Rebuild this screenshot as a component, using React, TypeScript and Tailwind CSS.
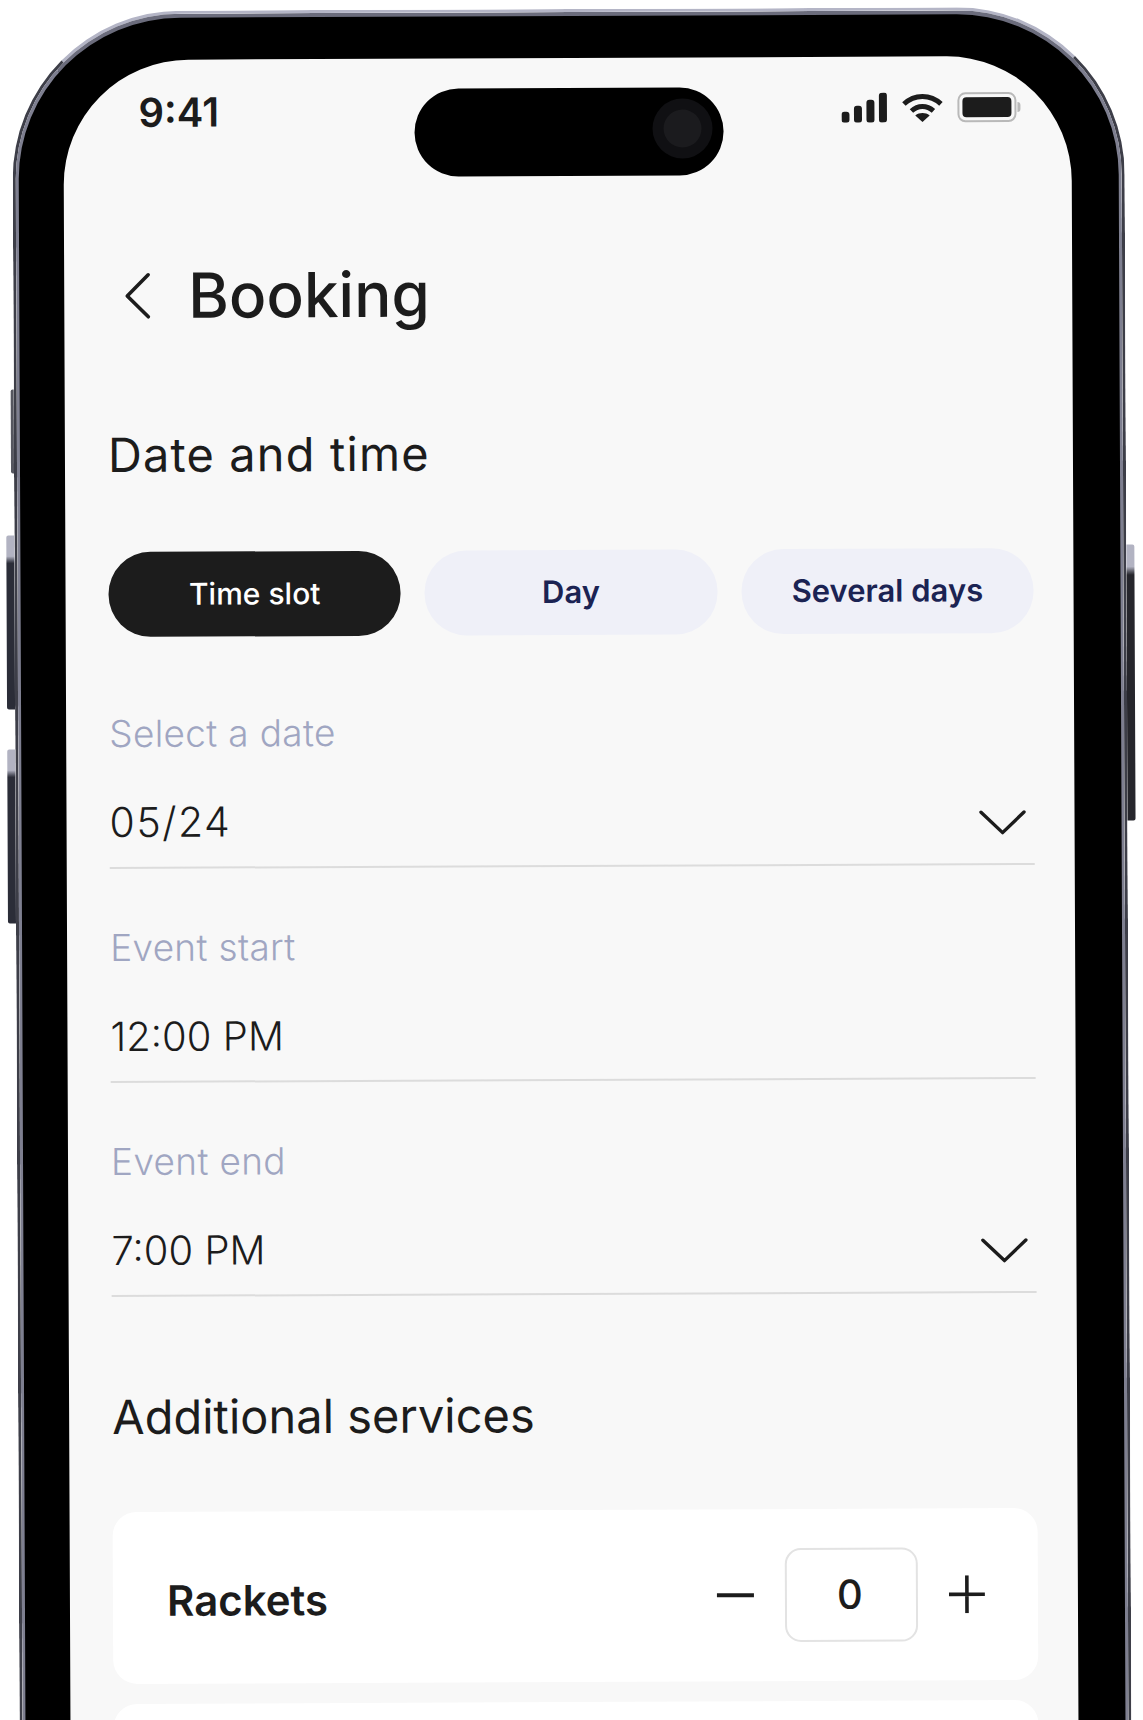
import React from 'react';

const inter = "font-['Inter','Noto_Sans',sans-serif]";

const Chevron = () => (
    <svg width="48" height="26" viewBox="0 0 48 26" fill="none" stroke="#1c1c1c" strokeWidth="3.4" strokeLinecap="round" strokeLinejoin="round">
        <path d="M2.5 3L24 23.5L45.5 3" />
    </svg>
);

const Field = ({ label, value, chevron, valueClass = 'text-[40px]' }: { label: string; value: string; chevron?: boolean; valueClass?: string }) => (
    <div className="flex flex-col">
        <div className={`h-10 flex items-center text-[37px] tracking-[0.3px] font-light text-[#a0a6c2] ${inter}`}>{label}</div>
        <div className={`mt-11 h-[50px] flex items-center justify-between font-light text-[#1c1c1c] ${valueClass} ${inter}`}>
            <span>{value}</span>
            {chevron && <span className="mr-2 mt-[6px] flex"><Chevron /></span>}
        </div>
        <div className="mt-[19px] h-[2px] bg-[#dcdcdc]" />
    </div>
);

const Pill = ({ label, active }: { label: string; active?: boolean }) => (
    <button className={`flex-1 h-[85px] rounded-[42px] flex items-center justify-center ${inter} ${active ? 'bg-[#1c1c1c] text-white text-[30px] font-medium' : 'bg-[#eff0f8] text-[#1b2353] text-[31px] font-semibold'}`}>
        {label}
    </button>
);

const StatusIcons = () => (
    <div className="flex items-center gap-[14px] mr-[11px] -mt-[4px]">
        <svg width="46" height="30" viewBox="0 0 46 30" fill="#1c1c1c">
            <rect x="0" y="19" width="8" height="11" rx="3" />
            <rect x="12.5" y="13" width="8" height="17" rx="3" />
            <rect x="25" y="7" width="8" height="23" rx="3" />
            <rect x="37.5" y="0" width="8" height="30" rx="3" />
        </svg>
        <svg width="42" height="30" viewBox="0 0 42 30" fill="none">
            <path d="M2.5 11.5C13 1.5 29 1.5 39.5 11.5" stroke="#1c1c1c" strokeWidth="5" />
            <path d="M10 18.5C16.5 12.5 25.5 12.5 32 18.5" stroke="#1c1c1c" strokeWidth="5" />
            <path d="M21 29.5L13.8 23C18 19.8 24 19.8 28.2 23Z" fill="#1c1c1c" />
        </svg>
        <div className="flex items-center gap-[1px]">
            <div className="w-[59px] h-[30px] rounded-[8px] border-[2px] border-[#b9b9b9] p-[3px] flex">
                <div className="flex-1 rounded-[4px] bg-[#1c1c1c]" />
            </div>
            <div className="w-[3px] h-[10px] rounded-r-full bg-[#b9b9b9]" />
        </div>
    </div>
);

const App: React.FC = () => {
    return (
        <div className="w-[1143px] h-[1720px] overflow-hidden bg-white">
            <div className="relative ml-[12px] mt-[9px] w-[1112px] h-[1800px] origin-top rotate-[-0.25deg]">
                {/* side buttons */}
                <div className="absolute -left-[3px] top-[378px] w-[3px] h-[84px] rounded-l-[2px] bg-[#55565f]" />
                <div className="absolute -left-[8px] top-[524px] w-[8px] h-[174px] rounded-l-[2px] bg-linear-to-b from-[#b2b3c2] from-[12%] to-[#2b2d38] to-[16%]" />
                <div className="absolute -left-[8px] top-[738px] w-[8px] h-[174px] rounded-l-[2px] bg-linear-to-b from-[#b2b3c2] from-[12%] to-[#2b2d38] to-[16%]" />
                <div className="absolute -right-[8px] top-[538px] w-[8px] h-[276px] rounded-r-[2px] bg-linear-to-b from-[#b2b3c2] from-[8%] to-[#26262c] to-[11%]" />

                <div className="h-full rounded-t-[168px] border-t-[3px] border-x-[3px] border-t-[#b4b5c6] border-x-[#3d3e48]">
                    <div className="h-full rounded-t-[165px] border-t-[4px] border-x-[3px] border-t-[#6b6c7c] border-x-[#7e7f90] bg-black pt-[42px] pl-[45px] pr-[47px]">
                        <div className="relative h-full rounded-t-[125px] bg-[#f8f8f8] pl-[43px] pr-[40px]">
                            {/* dynamic island */}
                            <div className="absolute left-[351px] top-[30px] w-[309px] h-[88px] rounded-full bg-black">
                                <div className="absolute right-[11px] top-[11px] w-[60px] h-[60px] rounded-full bg-[#101013] flex items-center justify-center">
                                    <div className="w-[38px] h-[38px] rounded-full bg-[#1b1b1e]" />
                                </div>
                            </div>

                            <div className="h-[106px] flex items-center justify-between">
                                <span className={`ml-[32px] text-[40px] leading-none font-semibold text-[#1c1c1c] ${inter}`}>9:41</span>
                                <StatusIcons />
                            </div>

                            <div className="mt-[90px] h-[80px] flex items-center">
                                <svg className="ml-4" width="30" height="48" viewBox="0 0 30 48" fill="none" stroke="#1c1c1c" strokeWidth="3.6" strokeLinecap="round" strokeLinejoin="round">
                                    <path d="M25 3L4 24L25 45" />
                                </svg>
                                <h1 className={`ml-[35px] text-[62px] leading-none font-medium text-[#1c1c1c] ${inter}`}>Booking</h1>
                            </div>

                            <h2 className={`mt-[89px] h-[60px] flex items-center text-[47px] tracking-[1.1px] text-[#1c1c1c] ${inter}`}>Date and time</h2>

                            <div className="mt-[67px] flex gap-6">
                                <Pill label="Time slot" active />
                                <Pill label="Day" />
                                <Pill label="Several days" />
                            </div>

                            <div className="mt-[77px] flex flex-col gap-[59px]">
                                <Field label="Select a date" value="05/24" chevron valueClass="text-[41px] tracking-[1.5px]" />
                                <Field label="Event start" value="12:00 PM" />
                                <Field label="Event end" value="7:00 PM" chevron />
                            </div>

                            <h2 className={`mt-[90px] h-[60px] flex items-center text-[47px] text-[#1c1c1c] ${inter}`}>Additional services</h2>

                            <div className="mt-[65px] h-[172px] rounded-[24px] bg-white pl-[54px] pr-[53px] flex items-center justify-between">
                                <span className={`mt-1 text-[42px] font-semibold text-[#1c1c1c] ${inter}`}>Rackets</span>
                                <div className="flex items-center">
                                    <div className="w-[37px] h-1 bg-[#1c1c1c]" />
                                    <div className={`ml-[31px] pr-[3px] w-[133px] h-[94px] rounded-[16px] border-[2px] border-[#e3e3e3] flex items-center justify-center text-[40px] font-medium text-[#1c1c1c] ${inter}`}>0</div>
                                    <svg className="ml-[31px]" width="36" height="38" viewBox="0 0 36 38" fill="none" stroke="#1c1c1c" strokeWidth="3.6">
                                        <path d="M0 19H36M18 0V38" />
                                    </svg>
                                </div>
                            </div>

                            <div className="mt-5 h-[172px] rounded-[24px] bg-white" />
                        </div>
                    </div>
                </div>
            </div>
        </div>
    );
};

export default App;
